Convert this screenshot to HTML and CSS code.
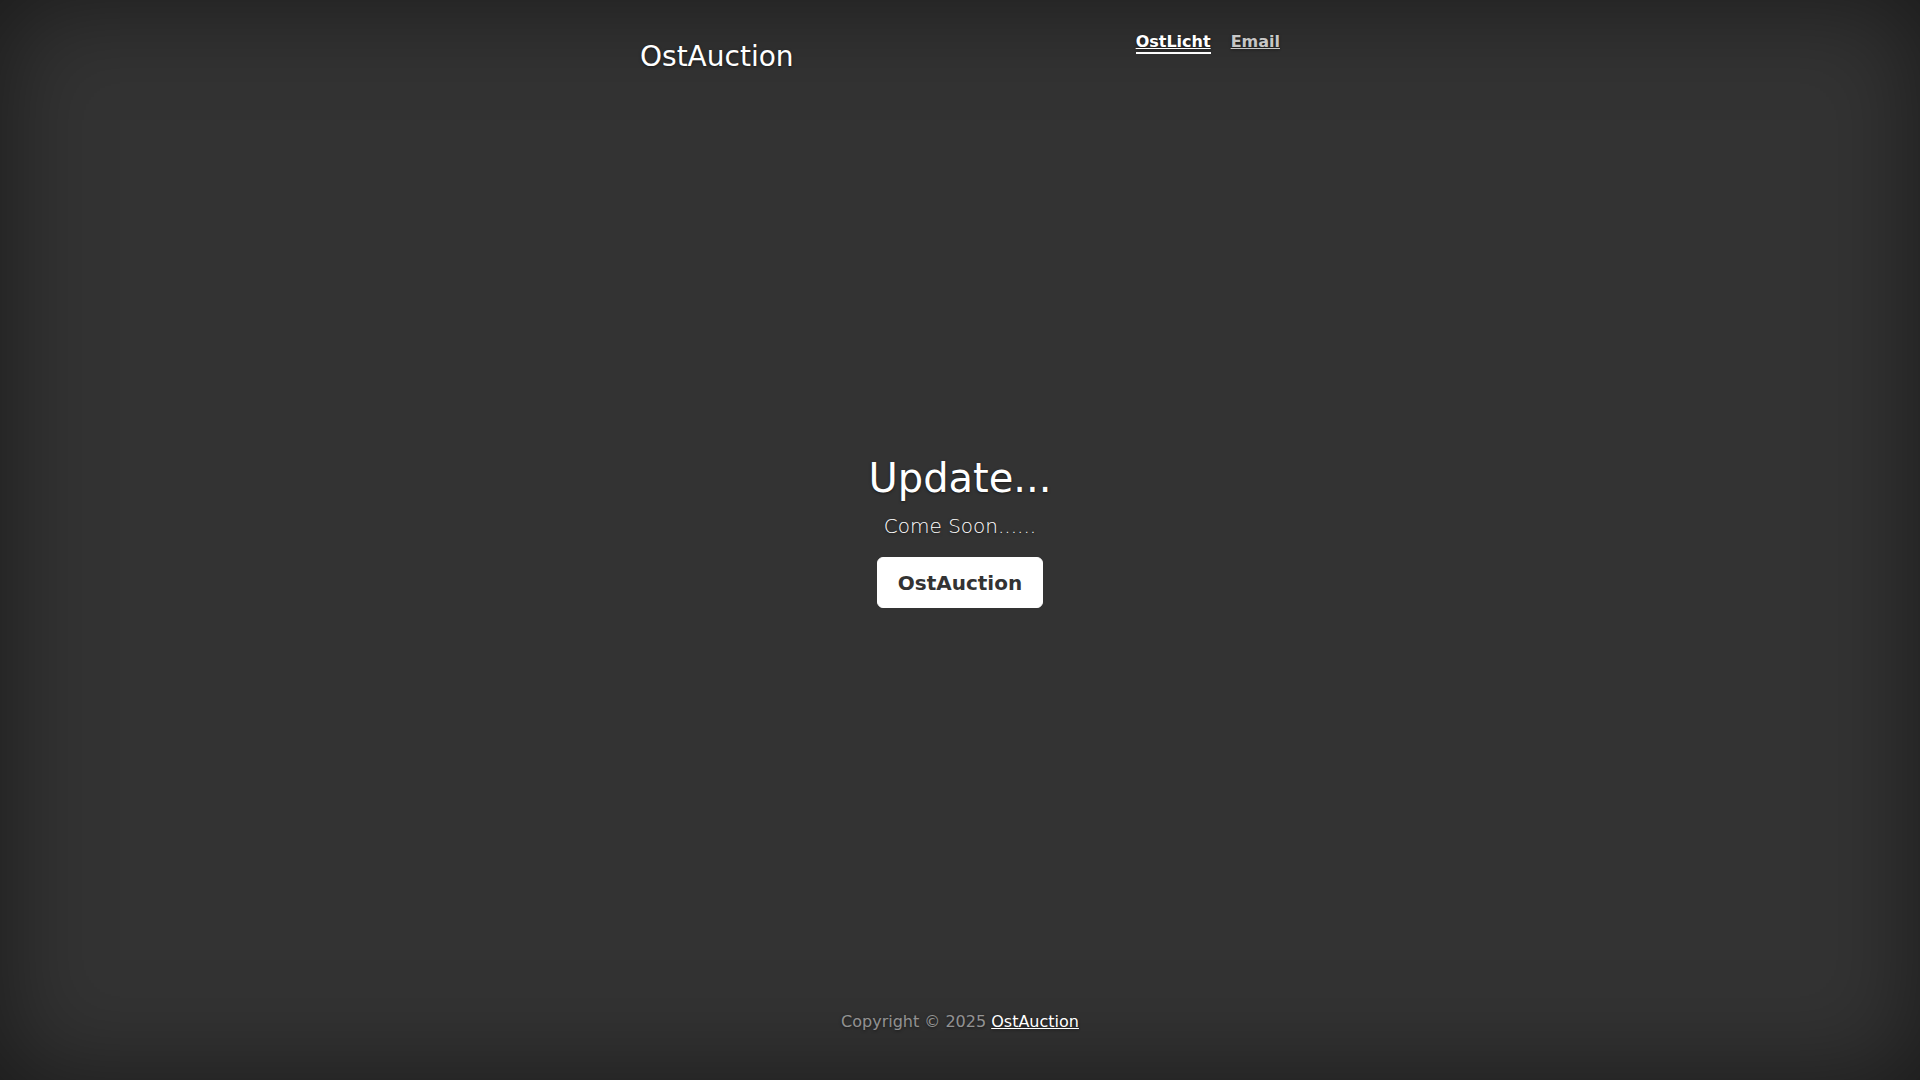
FILE: index.html
```html
<!DOCTYPE html>
<html lang="en">
<head>
<meta charset="utf-8">
<title>OstAuction</title>
<link rel="stylesheet" href="styles.css">
</head>
<body>
<div class="site">
  <header class="masthead">
    <h3 class="brand">OstAuction</h3>
    <nav class="nav">
      <a class="nav-link active" href="#">OstLicht</a>
      <a class="nav-link" href="#">Email</a>
    </nav>
  </header>
  <main class="cover">
    <div class="cover-inner">
      <h1 class="cover-heading">Update...</h1>
      <p class="lead">Come Soon......</p>
      <a class="btn" href="#">OstAuction</a>
    </div>
  </main>
  <footer class="mastfoot">
    <p class="copy">Copyright © 2025 <a href="#">OstAuction</a></p>
  </footer>
</div>
</body>
</html>
```
FILE: styles.css
```css
html, body {
  height: 100%;
  margin: 0;
}
body {
  background-color: #333;
  color: #fff;
  font-family: "DejaVu Sans", sans-serif;
  text-align: center;
  text-shadow: 0 1px 3px rgba(0, 0, 0, .5);
  box-shadow: inset 0 0 100px rgba(0, 0, 0, .5);
}
.site {
  height: 100vh;
  display: flex;
  flex-direction: column;
  align-items: center;
  box-sizing: border-box;
}
.masthead {
  width: 640px;
  display: flex;
  justify-content: space-between;
  align-items: flex-start;
  padding-top: 32px;
}
.brand {
  margin: 8px 0 0;
  font-size: 28px;
  font-weight: normal;
  line-height: 33.6px;
}
.nav {
  display: flex;
}
.nav-link {
  display: block;
  font-size: 16px;
  font-weight: bold;
  line-height: 20px;
  color: rgba(255, 255, 255, .75);
  border-bottom: 2px solid transparent;
  text-decoration: underline;
}
.nav-link + .nav-link {
  margin-left: 20px;
}
.nav-link.active {
  color: #fff;
  border-bottom-color: #fff;
}
.cover {
  flex: 1;
  display: flex;
  flex-direction: column;
  justify-content: center;
  align-items: center;
}
.cover-inner {
  margin-bottom: 21px;
}
.cover-heading {
  margin: 0 0 12px;
  font-size: 40px;
  font-weight: normal;
  line-height: 44px;
}
.lead {
  margin: 0 0 17px;
  font-size: 20px;
  font-weight: 300;
  line-height: 28px;
}
.btn {
  display: inline-block;
  padding: 11px 20px 9px;
  font-size: 20px;
  font-weight: bold;
  line-height: 29px;
  color: #333;
  background-color: #fff;
  border: 1px solid #fff;
  border-radius: 6px;
  text-decoration: none;
  text-shadow: none;
}
.mastfoot {
  padding-bottom: 48.5px;
  color: rgba(255, 255, 255, .5);
}
.copy {
  margin: 0;
  font-size: 16px;
  line-height: 20px;
}
.copy a {
  color: #fff;
  text-decoration: underline;
}
```
